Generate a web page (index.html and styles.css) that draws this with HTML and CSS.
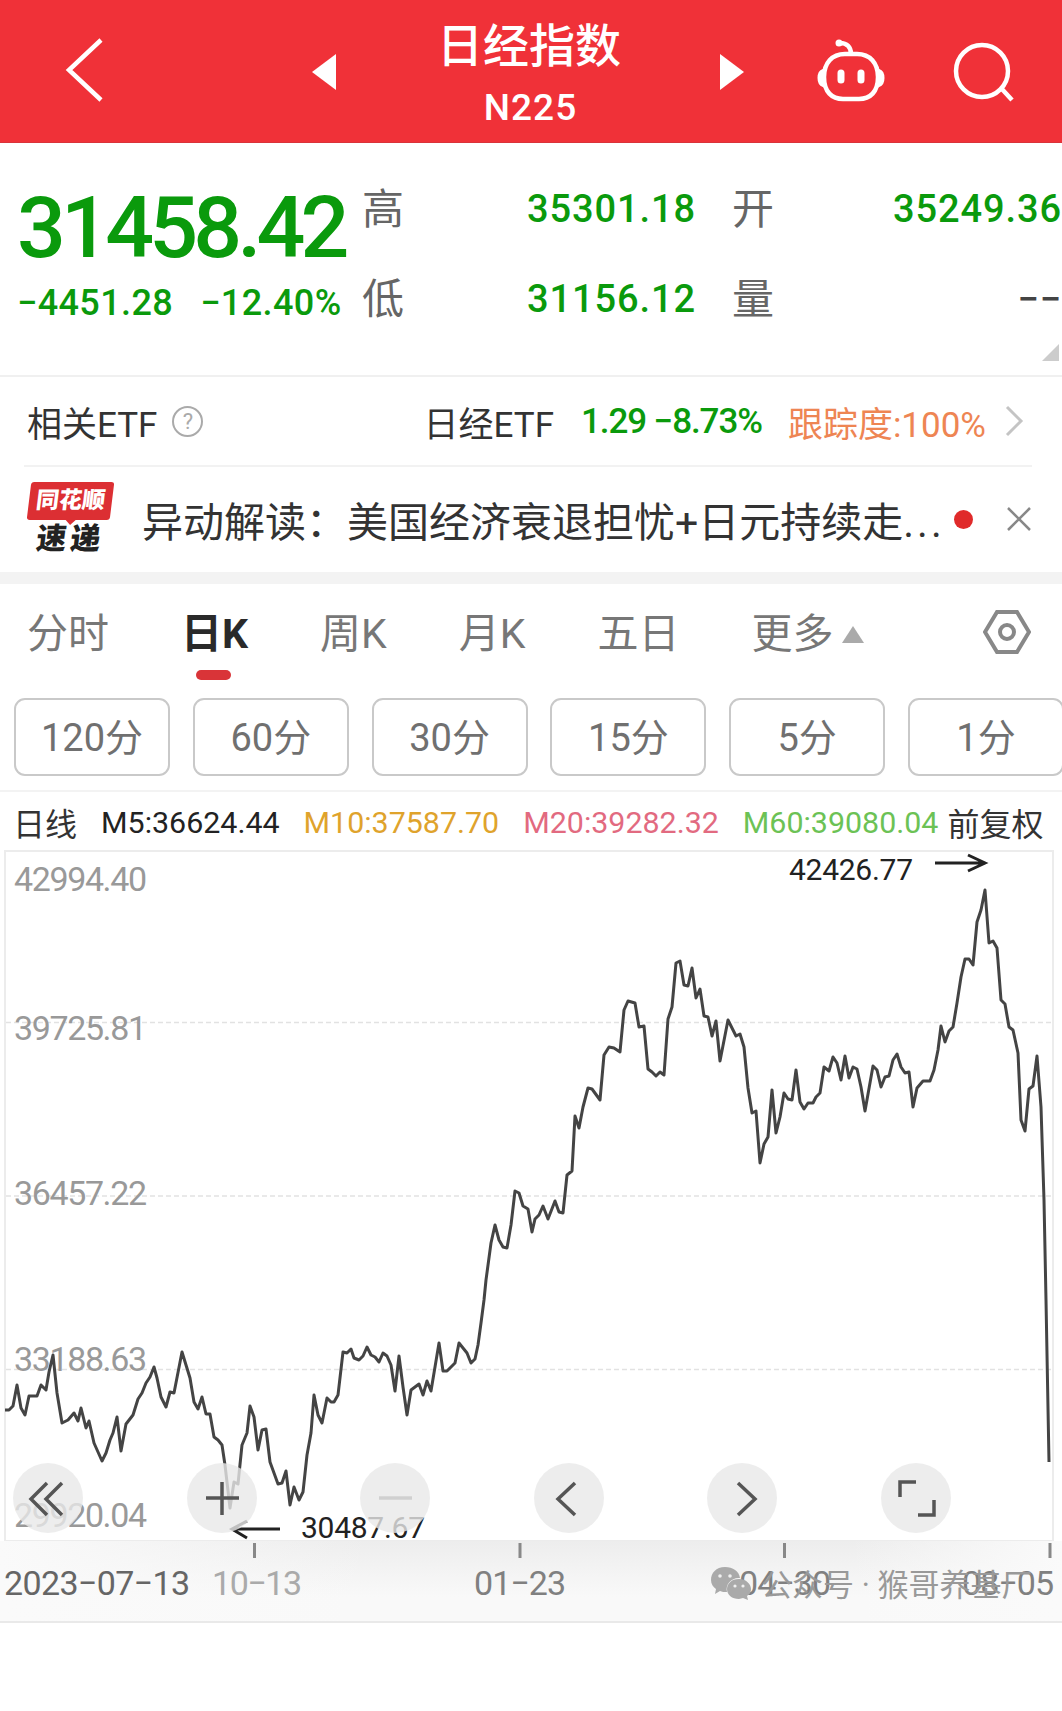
FILE: index.html
```html
<!DOCTYPE html>
<html lang="zh-CN">
  <head>
    <meta charset="UTF-8" />
    <meta name="viewport" content="width=device-width, initial-scale=1.0" />
    <title>日经指数 N225</title>
    <link rel="stylesheet" href="styles.css">
  </head>
  <body>
    <header class="topbar">
      <svg class="back" width="40" height="64" viewBox="0 0 40 64"><path d="M36 2L4 32L36 62" /></svg>
      <svg class="prev" width="24" height="36" viewBox="0 0 24 36"><path d="M24 0V36L0 18Z" /></svg>
      <div class="title">
        <h1>日经指数</h1>
        <p>N225</p>
      </div>
      <svg class="next" width="24" height="36" viewBox="0 0 24 36"><path d="M0 0V36L24 18Z" /></svg>
      <svg class="robot" width="70" height="66" viewBox="0 0 70 66">
        <path d="M24 5C31 5 35 9 35 16M29 16H41C54 16 62 25 62 39C62 54 54 61 43 61H27C16 61 8 54 8 39C8 25 16 16 29 16Z" />
        <path class="ear" d="M7 32C1 34 1 46 7 48ZM63 32C69 34 69 46 63 48Z" />
        <path class="eye" d="M25 35V42M45 35V42" />
        <circle class="ear" cx="23" cy="5" r="2.500" />
      </svg>
      <svg class="search" width="62" height="62" viewBox="0 0 62 62"><circle cx="29" cy="29" r="26" /><path d="M48 46L59 58" /></svg>
    </header>

    <section class="quote">
      <div class="price-box">
        <div class="price">31458.42</div>
        <div class="change"><span>−4451.28</span><span>−12.40%</span></div>
      </div>
      <dl class="stats">
        <dt>高</dt><dd>35301.18</dd><dt>开</dt><dd>35249.36</dd>
        <dt>低</dt><dd>31156.12</dd><dt>量</dt><dd class="empty">−−</dd>
      </dl>
      <i class="corner"></i>
    </section>

    <section class="etf">
      <span class="etf-label">相关ETF</span>
      <span class="help">?</span>
      <span class="etf-name">日经ETF</span>
      <span class="etf-price">1.29 −8.73%</span>
      <span class="etf-track">跟踪度:100%</span>
      <svg class="more" width="20" height="32" viewBox="0 0 20 32"><path d="M3 2L17 16L3 30" /></svg>
    </section>

    <section class="news">
      <div class="news-logo">
        <b class="logo-top">同花顺</b>
        <b class="logo-bottom">速递</b>
      </div>
      <span class="news-text">异动解读：美国经济衰退担忧+日元持续走<span class="dots">...</span></span>
      <i class="dot"></i>
      <svg class="close" width="26" height="26" viewBox="0 0 26 26"><path d="M2 2L24 24M24 2L2 24" /></svg>
    </section>

    <nav class="tabs">
      <span>分时</span>
      <span class="active">日K</span>
      <span>周K</span>
      <span>月K</span>
      <span>五日</span>
      <span>更多<i class="up"></i></span>
      <svg class="setting" width="48" height="46" viewBox="0 0 48 46"><path d="M14 3H34L46 23L34 43H14L2 23Z" /><circle cx="24" cy="23" r="7" /></svg>
    </nav>

    <div class="periods">
      <button>120分</button>
      <button>60分</button>
      <button>30分</button>
      <button>15分</button>
      <button>5分</button>
      <button>1分</button>
    </div>

    <div class="ma">
      <span class="ma-line">日线</span>
      <span class="m5">M5:36624.44</span>
      <span class="m10">M10:37587.70</span>
      <span class="m20">M20:39282.32</span>
      <span class="m60">M60:39080.04</span>
      <span class="ma-right">前复权</span>
    </div>

    <div class="chart">
      <svg class="plot" width="1062" height="692" viewBox="0 850 1062 692">
        <rect class="frame" x="5" y="851" width="1048" height="690" />
        <path class="grid" d="M6 1022.5H1052M6 1196H1052M6 1369.5H1052" />
        <g class="scale">
          <text x="14" y="891" textLength="133">42994.40</text>
          <text x="14" y="1040" textLength="133">39725.81</text>
          <text x="14" y="1205" textLength="133">36457.22</text>
          <text x="14" y="1371" textLength="133">33188.63</text>
          <text x="14" y="1527" textLength="133">29920.04</text>
        </g>
        <polyline class="price-line" points="5,1410 9,1410 13,1406 17,1385 21,1408 25,1415 29,1396 37,1396 41,1385 46,1390 49,1372 53,1355 57,1393 62,1423 68,1420 74,1413 78,1421 81,1408 86,1428 89,1421 94,1443 102,1461 106,1453 110,1440 113,1433 117,1417 121,1451 126,1424 133,1415 138,1399 142,1393 146,1383 150,1377 154,1367 157,1378 161,1397 166,1407 170,1392 174,1393 182,1352 190,1378 194,1402 198,1409 202,1397 206,1414 210,1414 214,1437 218,1440 222,1445 225,1465 230,1508 234,1482 238,1484 242,1445 247,1433 250,1406 254,1417 258,1450 262,1430 266,1429 270,1462 278,1484 282,1483 286,1471 290,1505 294,1487 299,1500 303,1492 307,1455 311,1433 314,1395 318,1415 322,1423 327,1398 331,1402 334,1402 338,1395 343,1352 347,1353 351,1349 354,1358 359,1360 363,1356 367,1347 371,1355 375,1357 379,1362 383,1353 387,1356 391,1365 395,1391 399,1356 403,1387 407,1415 411,1390 419,1384 423,1395 427,1381 431,1391 439,1343 443,1371 447,1371 452,1366 455,1363 459,1343 467,1353 471,1363 475,1359 478,1345 481,1323 484,1300 486,1280 491,1243 495,1225 499,1240 503,1247 507,1248 511,1225 515,1191 519,1193 523,1206 528,1209 532,1232 535,1219 539,1215 543,1206 548,1219 555,1201 559,1212 563,1213 567,1175 572,1171 575,1116 579,1128 583,1107 588,1088 592,1089 600,1100 604,1055 609,1047 614,1048 620,1052 624,1010 628,1001 635,1003 639,1027 644,1026 648,1069 652,1072 656,1076 660,1072 664,1075 668,1019 672,1007 676,963 680,961 684,985 688,986 692,968 696,998 700,989 704,1016 708,1017 712,1036 716,1021 720,1061 728,1020 736,1036 740,1034 744,1047 748,1088 752,1113 756,1111 760,1163 764,1144 768,1137 772,1090 776,1133 780,1117 784,1093 788,1099 792,1100 796,1070 800,1102 804,1109 808,1103 813,1103 816,1097 820,1093 824,1067 829,1071 833,1057 837,1063 841,1080 845,1056 849,1078 853,1067 857,1069 861,1087 865,1111 873,1066 877,1070 881,1087 885,1077 889,1076 893,1060 897,1054 901,1067 905,1073 909,1072 913,1107 917,1088 923,1081 930,1081 934,1070 938,1050 941,1026 945,1042 949,1031 953,1027 957,1003 961,977 965,959 969,959 973,965 977,922 981,910 985,890 989,943 993,941 997,948 1001,1000 1005,1004 1009,1027 1013,1030 1018,1053 1021,1120 1025,1131 1029,1089 1033,1086 1037,1056 1041,1107 1044,1200 1046,1300 1049,1462" />
        <g class="mark">
          <text x="789" y="880" textLength="124">42426.77</text>
          <path d="M935 863H984M968 855L985 863L968 871" />
          <text x="301" y="1538" textLength="124">30487.67</text>
          <path d="M280 1529H233M247 1521L232 1529L247 1538" />
        </g>
      </svg>
      <div class="controls">
        <span><svg width="70" height="70" viewBox="0 0 70 70"><path d="M34 20L18 36L34 52M49 20L33 36L49 52" /></svg></span>
        <span><svg width="70" height="70" viewBox="0 0 70 70"><path d="M19 35H52M35 19V52" /></svg></span>
        <span><svg class="off" width="70" height="70" viewBox="0 0 70 70"><path d="M19 35H52" /></svg></span>
        <span><svg width="70" height="70" viewBox="0 0 70 70"><path d="M41 20L24 36L41 52" /></svg></span>
        <span><svg width="70" height="70" viewBox="0 0 70 70"><path d="M31 20L48 36L31 52" /></svg></span>
        <span><svg width="70" height="70" viewBox="0 0 70 70"><path d="M19 34V19H35M37 52H53V37" /></svg></span>
      </div>
    </div>

    <footer class="axis">
      <svg width="1062" height="82" viewBox="0 1541 1062 82">
        <path class="tick" d="M254.500 1543V1558M520 1543V1558M784.500 1543V1558M1050 1543V1558" />
        <text class="dark" x="4" y="1595" textLength="186">2023−07−13</text>
        <text class="light" x="212" y="1595" textLength="90">10−13</text>
        <text x="474" y="1595" textLength="92">01−23</text>
        <text x="739" y="1595" textLength="92">04−30</text>
        <text x="962" y="1595" textLength="92">08−05</text>
      </svg>
      <div class="watermark">
        <svg width="42" height="36" viewBox="0 0 42 36">
          <path d="M15 1C6 1 1 7 1 14C1 18 3 21 6 23L5 28L10 25C12 26 14 26 17 26C15 18 22 11 30 12C29 5 23 1 15 1Z" />
          <path d="M29 13C21 13 17 18 17 23C17 29 22 33 29 33L33 32L38 34L37 30C40 28 41 26 41 23C41 18 36 13 29 13Z" />
          <g class="holes"><circle cx="10" cy="10" r="1.800" /><circle cx="20" cy="10" r="1.800" /><circle cx="25" cy="20" r="1.600" /><circle cx="33" cy="20" r="1.600" /></g>
        </svg>
        <span>公众号 · 猴哥养基厂</span>
      </div>
    </footer>
  </body>
</html>
```

FILE: styles.css
```css
* {
  box-sizing: border-box;
}
body {
  margin: 0;
  width: 1062px;
  height: 1711px;
  overflow: hidden;
  background: #fff;
  color: #333;
  font-family: Roboto, "Noto Sans CJK SC", sans-serif;
}
svg {
  display: block;
  flex: none;
  fill: none;
}
span,
b,
dt,
dd {
  white-space: nowrap;
}

/* header */
.topbar {
  display: flex;
  height: 143px;
  background: #f03138;
  color: #fff;
  border-bottom: 1px solid #d9333a;
}
.topbar svg {
  stroke: #fff;
  stroke-width: 4.500;
}
.back {
  margin: 38px 0 0 65px;
}
.topbar .prev,
.topbar .next {
  margin-top: 54px;
  fill: #fff;
  stroke: none;
}
.prev {
  margin-left: 207px;
}
.title {
  width: 384px;
  text-align: center;
}
.title h1 {
  margin: 13px 0 0;
  padding-left: 2px;
  font-size: 46px;
  font-weight: 500;
  line-height: 66px;
}
.title p {
  margin: 7px 0 0;
  padding-left: 5px;
  font-size: 37px;
  font-weight: 500;
  line-height: 44px;
  letter-spacing: 1px;
}
.robot {
  margin: 38px 0 0 72px;
}
.robot .eye {
  stroke-width: 7;
  stroke-linecap: round;
}
.robot .ear {
  fill: #fff;
  stroke-width: 2;
}
.search {
  margin: 42px 0 0 67px;
}

/* quote */
.quote {
  position: relative;
  display: flex;
  height: 234px;
  border-bottom: 2px solid #f0f0f0;
  color: #0a9a0c;
}
.price-box {
  width: 363px;
  padding-left: 17px;
}
.price {
  margin-top: 39px;
  height: 88px;
  font-size: 86px;
  font-weight: 500;
  line-height: 92px;
  letter-spacing: -4.800px;
}
.change {
  display: flex;
  gap: 27px;
  margin-top: 10px;
  font-size: 36px;
  font-weight: 500;
  line-height: 46px;
  letter-spacing: 0.400px;
}
.stats {
  display: grid;
  flex: none;
  grid-template-columns: 42px 292px 77px 289px;
  grid-template-rows: 90px 90px;
  margin: 38px 0 0;
}
.stats dt {
  color: #666;
  font-size: 42px;
  line-height: 57px;
}
.stats dt:nth-of-type(even) {
  padding-left: 36px;
}
.stats dd {
  margin: 0;
  font-size: 38px;
  font-weight: 500;
  line-height: 57px;
  letter-spacing: 0.900px;
  text-align: right;
}
.stats .empty {
  color: #444;
}
.corner {
  position: absolute;
  right: 3px;
  bottom: 14px;
  border-left: 17px solid transparent;
  border-bottom: 17px solid #ccc;
}

/* etf */
.etf {
  display: flex;
  align-items: center;
  height: 90px;
  margin: 0 30px 0 24px;
  padding-left: 3px;
  border-bottom: 2px solid #f2f2f2;
  font-size: 35px;
}
.help {
  width: 31px;
  height: 31px;
  margin-left: 15px;
  border: 2px solid #aaa;
  border-radius: 50%;
  color: #aaa;
  font-size: 22px;
  line-height: 28px;
  text-align: center;
}
.etf-name {
  margin-left: auto;
}
.etf-price {
  margin-left: 27px;
  color: #0a9a0c;
  font-weight: 500;
  letter-spacing: -1.100px;
}
.etf-track {
  margin-left: 26px;
  color: #ee8553;
}
.more {
  margin: 0 8px 0 18px;
  stroke: #c4c4c4;
  stroke-width: 3;
}

/* news */
.news {
  display: flex;
  align-items: center;
  height: 117px;
  padding: 0 30px 1px 29px;
  border-bottom: 12px solid #f3f3f3;
}
.news-logo {
  width: 83px;
  height: 76px;
  margin: 2px 30px 0 0;
}
.logo-top {
  position: relative;
  display: block;
  height: 38px;
  border-radius: 3px;
  background: #dc2f33;
  color: #fff;
  font-size: 23px;
  font-weight: 900;
  line-height: 38px;
  text-align: center;
  transform: skewX(-7deg);
}
.logo-top::after {
  content: "";
  position: absolute;
  left: 38px;
  top: 37px;
  border: 6px solid transparent;
  border-top-color: #dc2f33;
}
.logo-bottom {
  display: block;
  color: #222;
  font-size: 30px;
  font-weight: 900;
  line-height: 38px;
  letter-spacing: 4px;
  text-align: center;
  transform: skewX(-7deg);
}
.news-text {
  font-size: 41px;
}
.dots {
  letter-spacing: 3px;
}
.dot {
  width: 19px;
  height: 19px;
  margin-left: 9px;
  border-radius: 50%;
  background: #e02a2a;
}
.close {
  margin-left: auto;
  stroke: #888;
  stroke-width: 2.500;
}

/* tabs */
.tabs {
  display: flex;
  height: 114px;
  padding: 22px 31px 0 27px;
  color: #777;
  font-size: 41px;
  line-height: 56px;
}
.tabs span {
  margin-right: 72px;
}
.tabs .active {
  position: relative;
  color: #2a2a2a;
  font-weight: 700;
}
.active::after {
  content: "";
  position: absolute;
  left: 15px;
  top: 64px;
  width: 35px;
  height: 10px;
  border-radius: 5px;
  background: #d93438;
}
.up {
  display: inline-block;
  margin: 0 0 5px 8px;
  border: 11px solid transparent;
  border-top: 0;
  border-bottom: 17px solid #aaa;
}
.setting {
  margin: 3px 0 0 auto;
  stroke: #888;
  stroke-width: 4;
}

/* minute buttons */
.periods {
  display: flex;
  gap: 22.800px;
  height: 94px;
  padding-left: 14px;
  border-bottom: 2px solid #f3f3f3;
}
.periods button {
  flex: none;
  width: 156px;
  height: 78px;
  padding: 0 0 5px;
  border: 2px solid #c9c9c9;
  border-radius: 11px;
  background: #fff;
  color: #707070;
  font-family: inherit;
  font-size: 38px;
}

.ma {
  display: flex;
  align-items: center;
  height: 60px;
  margin-bottom: -2px;
  padding-left: 13px;
  font-size: 30.400px;
}
.ma-line,
.ma-right {
  font-size: 32px;
}
.m5 {
  margin-left: 24px;
  color: #222;
}
.m10 {
  margin-left: 24px;
  color: #dfa32c;
}
.m20 {
  margin-left: 24px;
  color: #e26a80;
}
.m60 {
  margin-left: 24px;
  color: #6cc255;
}
.ma-right {
  margin-left: 9px;
}

/* chart */
.chart {
  position: relative;
  height: 691px;
}
.frame {
  stroke: #ececec;
  stroke-width: 2;
}
.grid {
  stroke: #e2e2e2;
  stroke-width: 1.500;
  stroke-dasharray: 5 3;
}
.scale text {
  fill: #999;
  font-size: 34px;
}
.price-line {
  stroke: #444;
  stroke-width: 3;
  stroke-linejoin: round;
}
.mark text {
  fill: #222;
  font-size: 30px;
}
.mark path {
  stroke: #222;
  stroke-width: 3;
}
.controls {
  position: absolute;
  left: 13px;
  top: 613px;
  display: flex;
  gap: 103.600px;
}
.controls span {
  width: 70px;
  height: 70px;
  border-radius: 50%;
  background: rgba(233, 233, 233, 0.800);
}
.controls svg {
  stroke: #555;
  stroke-width: 3.500;
}
.controls .off {
  stroke: #d0d0d0;
}

/* dates */
.axis {
  position: relative;
  height: 82px;
  border-bottom: 2px solid #e9e9e9;
  background:
    linear-gradient(90deg, #fafafa, transparent 35%, transparent 80%, #fafafa),
    linear-gradient(#ededed, #f9f9f9 70%);
}
.tick {
  stroke: #888;
  stroke-width: 3;
}
.axis text {
  fill: #808080;
  font-size: 34px;
}
.axis .dark {
  fill: #666;
}
.axis .light {
  fill: #aaa;
}
.watermark {
  position: absolute;
  left: 710px;
  top: 25px;
  display: flex;
  gap: 9px;
  color: #999;
  font-size: 31px;
  line-height: 40px;
}
.watermark path {
  fill: #aaa;
}
.watermark .holes {
  fill: #f0f0f0;
}
```
